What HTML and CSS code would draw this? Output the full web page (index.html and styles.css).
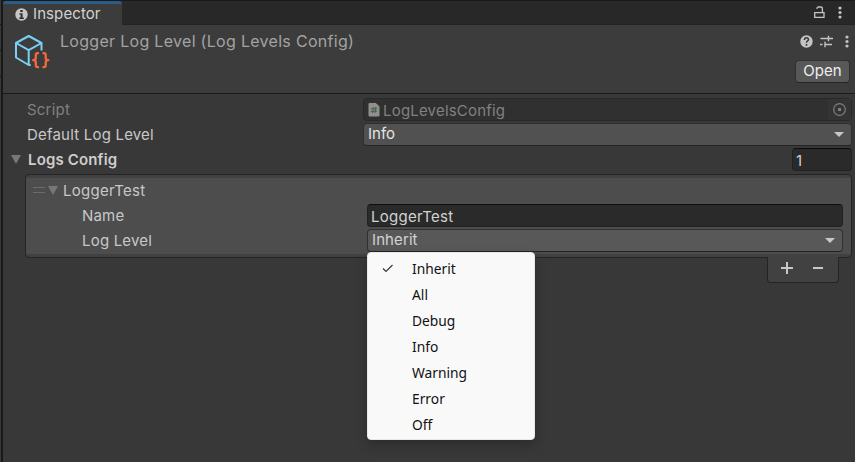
FILE: index.html
```html
<!DOCTYPE html>
<html lang="en">
<head>
<meta charset="utf-8">
<title>Inspector</title>
<link rel="stylesheet" href="styles.css">
</head>
<body>
<div class="window">
  <div class="edge"><i></i><i></i><i></i></div>
  <main class="panel">
    <nav class="tabs">
      <div class="tab">
        <svg class="info" width="13" height="13" viewBox="0 0 13 13"><circle cx="6.5" cy="6.5" r="6.2" fill="#c6c6c6"/><path d="M5.3 2h2.4v2H5.3zM4.4 5.3h3.2v4.3h1.2V11H4.3V9.600h1.200V6.600H4.400z" fill="#303030"/></svg>
        <span class="tab-name">Inspector</span>
      </div>
      <div class="tab-tools">
        <svg width="11" height="13" viewBox="0 0 11 13" fill="none" stroke="#c4c4c4" stroke-width="1.300"><path d="M.7 6.600h9.300v4.800H.7zM3 3V2.600Q3 1 4.500 1h2Q8.400 1 8.400 2.800v3.800"/></svg>
        <svg class="dots" width="4" height="13" viewBox="0 0 4 13" fill="#c4c4c4"><circle cx="2" cy="2" r="1.600"/><circle cx="2" cy="6.500" r="1.600"/><circle cx="2" cy="11" r="1.600"/></svg>
      </div>
    </nav>
    <header class="header">
      <svg class="asset" width="38" height="38" viewBox="0 0 38 38" fill="none" stroke-linejoin="round"><path d="M27.500 17.500V10L14.700 3 2 10v14.500l12.700 7.500h2M2 10l12.700 7.200L27.500 10M14.700 17.200V32" stroke="#7bcff5" stroke-width="2"/><path d="M25.500 20.200h-1.300q-1.900 0-1.900 1.900v2.800q0 2.300-2.600 2.300 2.600 0 2.600 2.300v2.800q0 1.900 1.900 1.900h1.300M29 20.200h1.300q1.900 0 1.900 1.900v2.800q0 2.300 2.600 2.300-2.600 0-2.600 2.300v2.800q0 1.900-1.900 1.900H29" transform="translate(-.5 0)" stroke="#f4693b" stroke-width="2.300"/></svg>
      <h1 class="title">Logger Log Level (Log Levels Config)</h1>
      <div class="header-side">
        <div class="header-tools">
          <svg width="13" height="13" viewBox="0 0 13 13"><circle cx="6.500" cy="6.500" r="6.200" fill="#c4c4c4"/><path d="M4.500 5V4.300Q4.700 2.800 6.500 2.800T8.500 4.500Q8.500 5.500 7.300 6.100 6.500 6.500 6.500 7.700M6.500 9v1.700" fill="none" stroke="#383838" stroke-width="1.600"/></svg>
          <svg class="sliders" width="13" height="13" viewBox="0 0 13 13" stroke="#c4c4c4" stroke-width="1.400" fill="none"><path d="M.5 3.500H8M9 3.500h4M8.500 .8v5.400M0 9.500h2.500M5 9.500h7M5 6.800v5.400"/></svg>
          <svg class="dots" width="4" height="13" viewBox="0 0 4 13" fill="#c4c4c4"><circle cx="2" cy="2" r="1.600"/><circle cx="2" cy="6.500" r="1.600"/><circle cx="2" cy="11" r="1.600"/></svg>
        </div>
        <button class="open"><span>Open</span></button>
      </div>
    </header>
    <section class="body">
      <div class="row disabled">
        <span class="label script">Script</span>
        <div class="field object">
          <svg width="12" height="14" viewBox="0 0 12 14"><path d="M1 .5h7l3 3V13H1z" fill="#909090" stroke="#909090" stroke-linejoin="round"/><path d="M5.300 4 4.500 10M7.800 4 7 10M3 5.800h6.300M2.800 8.300h6.300" stroke="#466449" stroke-width="1.100"/></svg>
          <span class="value object-name">LogLevelsConfig</span>
          <span class="picker"><svg width="13" height="13" viewBox="0 0 13 13"><circle cx="6.500" cy="6.500" r="5.800" fill="none" stroke="#7e7e7e" stroke-width="1.200"/><path d="M5 5h3v3H5z" fill="#7e7e7e"/></svg></span>
        </div>
      </div>
      <div class="row">
        <span class="label default">Default Log Level</span>
        <div class="field dropdown"><span class="value info-value">Info</span><i class="arrow"></i></div>
      </div>
      <div class="row foldout">
        <i class="triangle"></i>
        <span class="label logs">Logs Config</span>
        <div class="field input count"><span class="value">1</span></div>
      </div>
      <div class="list">
        <div class="element">
          <div class="item-row first"><i class="handle"></i><i class="triangle"></i><span class="label item-title">LoggerTest</span></div>
          <div class="item-row"><span class="label name">Name</span><div class="field input"><span class="value item-title">LoggerTest</span></div></div>
          <div class="item-row"><span class="label level">Log Level</span>
            <div class="field dropdown"><span class="value inherit">Inherit</span><i class="arrow"></i>
              <ul class="menu">
                <li><svg class="check" width="12" height="9" viewBox="0 0 12 9"><path d="m1 4.500 3 3L10.500 1" fill="none" stroke="#333" stroke-width="1.100"/></svg><span>Inherit</span></li>
                <li><span>All</span></li>
                <li><span>Debug</span></li>
                <li><span>Info</span></li>
                <li><span>Warning</span></li>
                <li><span>Error</span></li>
                <li><span>Off</span></li>
              </ul>
            </div>
          </div>
        </div>
      </div>
      <div class="list-footer">
        <svg width="12" height="12" viewBox="0 0 12 12"><path d="M0 6h12M6 0v12" stroke="#c8c8c8" stroke-width="2"/></svg>
        <svg width="12" height="12" viewBox="0 0 12 12"><path d="M1 6h10" stroke="#c8c8c8" stroke-width="2"/></svg>
      </div>
    </section>
  </main>
</div>
</body>
</html>
```
FILE: styles.css
```css
* { box-sizing: border-box; }
body { margin: 0; background: #383838; color: #c8c8c8; font: 15px/20px Inter, sans-serif; overflow: hidden; }
.window { display: flex; width: 855px; height: 462px; }
.edge { width: 3px; border-right: 2px solid #191919; background: #383838; padding-top: 24px; }
.edge i { display: block; height: 26px; border-top: 1px solid #191919; background: #383838; }
.panel { flex: 1; display: flex; flex-direction: column; min-width: 0; }
.tabs { height: 25px; display: flex; justify-content: space-between; background: #282828; border-top: 1px solid #191919; border-bottom: 1px solid #232323; }
.tab { width: 119px; height: 24px; display: flex; align-items: center; padding: 0 0 1px 11.5px; border-top: 3px solid #2c5d87; border-radius: 3px 3px 0 0; background: #3c3c3c; }
.tab-name { margin-left: 5.5px; letter-spacing: .1px; color: #d2d2d2; }
.tab-tools { display: flex; align-items: center; gap: 13px; padding: 0 13px 1px 0; }
svg { display: block; flex: none; }
.header { height: 69px; display: flex; background: #3c3c3c; border-bottom: 1px solid #1a1a1a; }
.asset { margin: 8px 0 0 11px; }
.title { margin: 6px 0 0 8px; font-size: 16px; font-weight: 400; letter-spacing: .3px; color: #a3a3a3; white-space: nowrap; }
.header-side { margin-left: auto; width: 60px; display: flex; flex-direction: column; }
.header-tools { display: flex; gap: 7px; margin: 10px 0 12px 5px; }
.header-tools .dots { margin-left: 5px; }
.open { width: 55px; height: 23px; margin: 0; padding: 0 0 2px 0; background: #585858; border: 1px solid #303030; border-bottom-color: #242424; border-radius: 4px; font: 15px/20px Inter, sans-serif; color: #eee; }
.body { padding: 4px 3px 0 0; }
.row { height: 25px; display: flex; padding-left: 24px; }
.label { flex: none; white-space: nowrap; width: 336px; padding-top: 2px; letter-spacing: .2px; }
.value { white-space: nowrap; }
.disabled .label, .disabled .value { color: #808080; }
.field { position: relative; flex: 1; height: 23px; display: flex; align-items: center; border: 1px solid #303030; border-radius: 4px; color: #d2d2d2; }
.object { background: #303030; border-color: #292929; padding-left: 4px; }
.object-name { margin-left: 3px; padding-top: 2px; letter-spacing: .2px; }
.picker { margin-left: auto; width: 23px; height: 21px; background: #343434; display: grid; place-items: center; }
.dropdown { background: #515151; border-bottom-color: #242424; padding: 0 7px 1px 4px; }
.info-value { color: #e4e4e4; }
.inherit { letter-spacing: .1px; }
.arrow { margin-left: auto; border: 5px solid transparent; border-top-color: #c8c8c8; border-bottom: 0; }
.input { background: #2a2a2a; border-color: #212121; border-top-color: #0d0d0d; padding: 2px 3px 0; }
.foldout { padding-left: 8px; }
.triangle { flex: none; width: 10px; height: 9px; margin-top: 7px; background: #777; clip-path: polygon(0 0, 100% 0, 50% 100%); }
.foldout .label { width: 200px; margin-left: 7px; font-weight: 600; letter-spacing: .15px; color: #cecece; }
.count { flex: none; width: 60px; margin-left: auto; }
.list { margin: 1px 0 0 22px; height: 84px; padding: 3px 0; background: #414141; border: 1px solid #242424; border-radius: 4px; }
.element { height: 76px; background: #4d4d4d; padding: 1px 8px 0 0; }
.item-row { height: 25px; display: flex; }
.item-row .label { margin-left: 56px; width: 285px; }
.item-row .item-title { letter-spacing: .3px; }
.handle { width: 12px; height: 6px; margin: 8px 3px 0 7px; border: solid #6c6c6c; border-width: 1px 0; }
.item-row.first .label { margin-left: 5px; }
.item-row .dropdown { background: #585858; }
.list-footer { width: 72px; height: 26px; margin: -1px 13px 0 auto; position: relative; display: flex; align-items: flex-start; gap: 19px; padding: 5px 0 0 13px; background: #414141; border: 1px solid #242424; border-top: 0; border-radius: 0 0 4px 4px; }
.menu { position: absolute; z-index: 2; left: -1px; top: 22px; width: 168px; height: 188px; margin: 0; padding: 2px 0; list-style: none; background: #f9f9f9; border: 1px solid #e8e8e8; border-radius: 4px; color: #111; font: 15px/26px "Noto Sans", sans-serif; box-shadow: 0 5px 12px rgba(0,0,0,.22); }
.menu li { height: 26px; padding-left: 44px; position: relative; }
.menu span { display: inline-block; transform: scaleX(.92); transform-origin: left; }
.check { position: absolute; left: 14px; top: 9px; }
```
